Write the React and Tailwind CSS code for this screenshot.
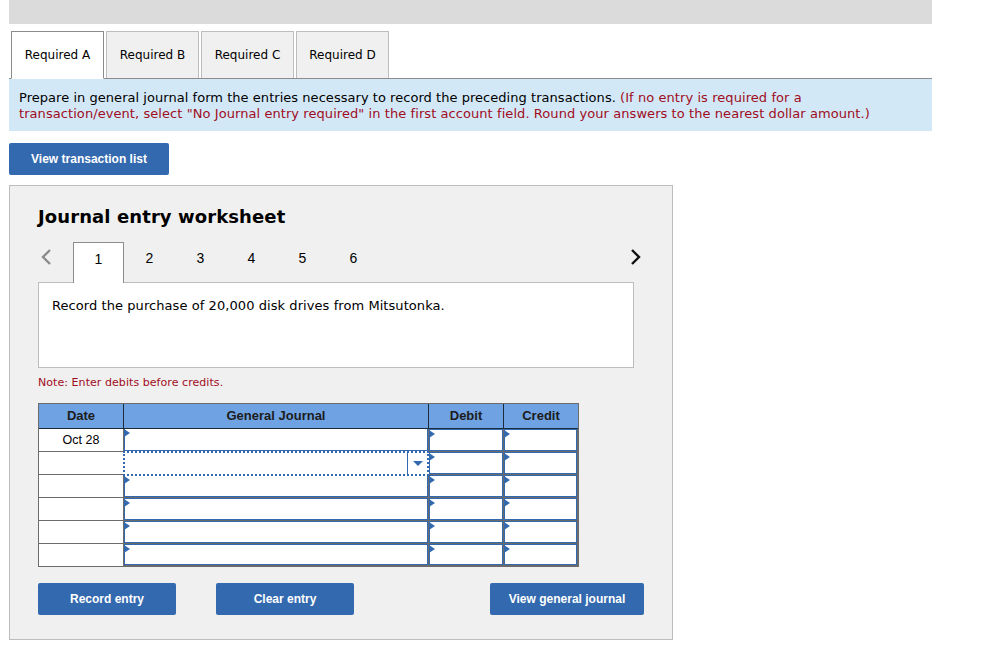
const verdana = "font-['DejaVu_Sans',Verdana,sans-serif]"

function Marker() {
  return <span className="absolute -left-px top-0 w-0 h-0 border-y-[4px] border-y-transparent border-l-[6px] border-l-[#3369ae]" />
}

function Cell({ first }) {
  return (
    <div className="h-full pr-px pb-px">
      <div className={`relative h-full border-x border-b border-[#3369ae] bg-white ${first ? 'border-t-0' : 'border-t'}`}>
        <Marker />
      </div>
    </div>
  )
}

function Btn({ children, w }) {
  return (
    <button className={`${w} h-8 bg-[#3369ae] rounded-[2px] text-white text-xs font-bold font-['Liberation_Sans',Arial,sans-serif]`}>
      {children}
    </button>
  )
}

export default function App() {
  const tabs = ['Required A', 'Required B', 'Required C', 'Required D']
  const steps = [1, 2, 3, 4, 5, 6]
  const rows = [0, 1, 2, 3, 4, 5]

  return (
    <div className={`w-[992px] h-[670px] bg-white pl-[9px] overflow-hidden ${verdana}`}>
      <div className="w-[923px] h-6 bg-[#dbdbdb]" />

      <div className="w-[923px] mt-[7px] pl-[2px] flex gap-[2px] h-12 border-b border-[#8c8c8c]">
        {tabs.map((t, i) => (
          <div
            key={t}
            className={`w-[93px] flex items-center justify-center text-xs text-black border ${i === 0 ? 'h-12 bg-white border-[#8c8c8c] border-b-white' : 'h-[47px] bg-[#f0f0f0] border-[#bdbdbd] border-b-0'}`}
          >
            {t}
          </div>
        ))}
      </div>

      <div className="w-[923px] h-[52px] bg-[#d3e8f7] pl-[10px] pt-[11px] text-[13px] leading-4 tracking-[0.04px] text-black">
        Prepare in general journal form the entries necessary to record the preceding transactions.{' '}
        <span className="text-[#a00d22] tracking-[0.07px]">
          (If no entry is required for a<br />
          transaction/event, select "No Journal entry required" in the first account field. Round your answers to the nearest dollar amount.)
        </span>
      </div>

      <div className="mt-3">
        <Btn w="w-40">View transaction list</Btn>
      </div>

      <div className="mt-[10px] w-[664px] h-[455px] bg-[#f0f0f0] border border-[#bdbdbd] pl-[28px] pt-[19px]">
        <h2 className="text-[18px] leading-6 font-bold text-black tracking-[0.1px]">Journal entry worksheet</h2>

        <div className="mt-[13px] w-[596px] h-[40px] flex items-start relative">
          <svg width="12" height="18" viewBox="0 0 12 18" className="ml-[2px] mr-[21px] mt-[6px]" fill="none" stroke="#8c8c8c" strokeWidth="2.4">
            <path d="M10 2 3 9l7 7" />
          </svg>
          {steps.map(s => (
            <div
              key={s}
              className={`w-[51px] pt-[8px] text-center text-sm leading-4 font-['Liberation_Sans',Arial,sans-serif] text-black ${s === 1 ? 'bg-white border border-[#8c8c8c] border-b-0 relative z-10 h-[41px]' : 'h-[40px]'}`}
            >
              {s}
            </div>
          ))}
          <svg width="12" height="18" viewBox="0 0 12 18" className="ml-auto mr-[-8px] mt-[6px]" fill="none" stroke="#111" strokeWidth="2.4">
            <path d="M2 2l7 7-7 7" />
          </svg>
        </div>

        <div className="w-[596px] h-[86px] bg-white border border-[#bdbdbd] pl-[13px] pt-[15px] text-[13px] leading-4 tracking-[0.07px] text-black">
          Record the purchase of 20,000 disk drives from Mitsutonka.
        </div>

        <p className="mt-[8px] text-[11px] leading-[14px] tracking-[0.06px] text-[#a00d22]">Note: Enter debits before credits.</p>

        <div className="mt-[13px] w-[541px] border-[1px] border-[#6b6b6b] font-['Liberation_Sans',Arial,sans-serif]">
          <div className="grid grid-cols-[85px_305px_75px_74px] h-[25px] bg-[#6ea2e2] text-[13px] font-bold text-[#1c1c1c] border-b border-[#1c2b3a]">
            <div className="flex items-center justify-center border-r border-[#1c2b3a]">Date</div>
            <div className="flex items-center justify-center border-r border-[#1c2b3a]">General Journal</div>
            <div className="flex items-center justify-center border-r border-[#1c2b3a]">Debit</div>
            <div className="flex items-center justify-center">Credit</div>
          </div>
          {rows.map(r => (
            <div key={r} className={`grid grid-cols-[85px_305px_75px_74px] bg-[#6b6b6b] ${r < 5 ? 'h-[23px]' : 'h-[22px]'}`}>
              <div className={`bg-white flex items-center justify-center text-[12.5px] text-black border-r border-[#6b6b6b] ${r < 5 ? 'border-b' : ''}`}>
                {r === 0 ? 'Oct 28' : ''}
              </div>
              {r === 1 ? (
                <div className="relative z-10 h-[25px] -my-[1px] -ml-[1px] w-[306px] bg-white border-[2px] border-dotted border-[#3369ae] flex justify-end">
                  <div className="w-[20px] h-full border-l border-[#3369ae] flex items-center justify-center">
                    <span className="w-0 h-0 border-x-[5px] border-x-transparent border-t-[5px] border-t-[#3369ae]" />
                  </div>
                </div>
              ) : (
                <Cell first={r === 0} />
              )}
              <Cell />
              <Cell />
            </div>
          ))}
        </div>

        <div className="mt-4 w-[606px] flex">
          <Btn w="w-[138px]">Record entry</Btn>
          <div className="ml-10"><Btn w="w-[138px]">Clear entry</Btn></div>
          <div className="ml-auto"><Btn w="w-[154px]">View general journal</Btn></div>
        </div>
      </div>
    </div>
  )
}
